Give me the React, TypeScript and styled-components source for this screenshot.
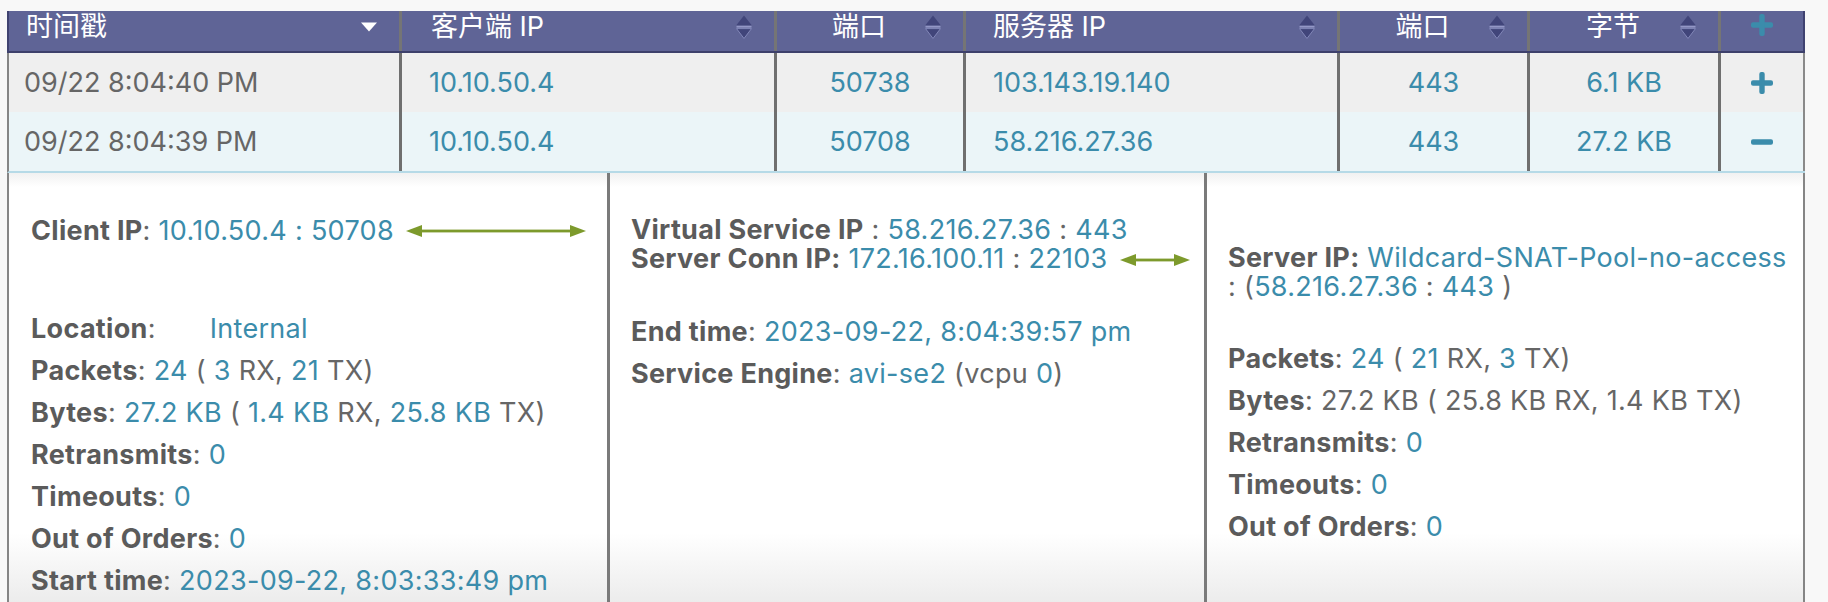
import React from "react";
import styled, { createGlobalStyle } from "styled-components";

const FONT = `Inter, "Noto Sans CJK SC", sans-serif`;
const TEAL = "#3b8cab";
const GRAY = "#5b5b5b";
const TEXT = "#666666";

const GlobalStyle = createGlobalStyle`
  html, body { margin: 0; padding: 0; background: #f8f8f8; }
  body { font-family: ${FONT}; overflow: hidden; font-variant-numeric: proportional-nums; }
`;

const Page = styled.div`
  padding: 11px 0 0 7px;
  width: 1798px;
`;

const Table = styled.div`
  display: flex;
  flex-direction: column;
  width: 1798px;
`;

const COLS = "393px 375px 189px 374px 190px 191px 84px";

const HeaderRow = styled.div`
  display: grid;
  grid-template-columns: ${COLS};
  height: 40px;
  background: #5f6496;
  border-left: 2px solid #3f4270;
  border-bottom: 2px solid #3d406b;
`;

const HeaderCell = styled.div<{ $align: "left" | "center"; $pad?: number }>`
  display: grid;
  grid-template-columns: ${(p) => (p.$align === "center" ? "1fr auto 1fr" : "auto 1fr")};
  align-items: center;
  box-sizing: border-box;
  padding: 0 22px 8px ${(p) => p.$pad ?? 0}px;
  border-right: 3px solid #757575;
  color: #ffffff;
  font-size: 27px;
  line-height: 32px;
  white-space: nowrap;
`;

const HeadLabel = styled.span``;

const IconSlot = styled.span`
  display: flex;
  justify-content: flex-end;
  align-items: center;
`;

const HeaderAction = styled.div`
  display: flex;
  align-items: center;
  justify-content: center;
  padding-bottom: 12px;
  border-right: 2px solid #3f4270;
`;

const DataRow = styled.div<{ $tone: "gray" | "blue"; $expanded?: boolean }>`
  display: grid;
  grid-template-columns: ${COLS};
  height: ${(p) => (p.$expanded ? 61 : 59)}px;
  box-sizing: border-box;
  background: ${(p) => (p.$tone === "gray" ? "#efefef" : "#ebf5f8")};
  border-left: 2px solid #858585;
  border-bottom: ${(p) => (p.$expanded ? "2px solid #b6dae7" : "none")};
`;

const Cell = styled.div<{ $align: "left" | "center"; $pad?: number; $tone?: "teal" | "gray"; $last?: boolean }>`
  display: flex;
  align-items: center;
  justify-content: ${(p) => (p.$align === "center" ? "center" : "flex-start")};
  box-sizing: border-box;
  padding-left: ${(p) => p.$pad ?? 0}px;
  border-right: ${(p) => (p.$last ? "2px solid #8a8a8a" : "3px solid #6f6f6f")};
  color: ${(p) => (p.$tone === "gray" ? TEXT : TEAL)};
  font-size: 27px;
  white-space: nowrap;
`;

const Details = styled.div`
  display: grid;
  grid-template-columns: 601px 597px 596px;
  height: 429px;
  box-sizing: border-box;
  border-left: 2px solid #858585;
  border-right: 2px solid #858585;
  background: linear-gradient(to bottom, #f1f1f1 0px, #ffffff 14px, #ffffff 360px, #ececec 429px);
`;

const DetailColumn = styled.div<{ $top: number; $pad: number; $divider?: boolean }>`
  display: flex;
  flex-direction: column;
  box-sizing: border-box;
  padding: ${(p) => p.$top}px 0 0 ${(p) => p.$pad}px;
  border-right: ${(p) => (p.$divider ? "3px solid #7a7a7a" : "none")};
`;

const Section = styled.div<{ $gap: number }>`
  display: flex;
  flex-direction: column;
  gap: 14px;
  margin-bottom: ${(p) => p.$gap}px;
`;

const Line = styled.div`
  display: flex;
  align-items: center;
  font-size: 27px;
  line-height: 28px;
  letter-spacing: 0.3px;
  color: ${TEXT};
  white-space: nowrap;
`;

const Block = styled.div`
  font-size: 27px;
  line-height: 28.5px;
  letter-spacing: 0.3px;
  color: ${TEXT};
  white-space: nowrap;
`;

const Label = styled.span`
  font-weight: 700;
  color: ${GRAY};
`;

const Val = styled.span`
  color: ${TEAL};
`;

const Spacer = styled.span<{ $w: number }>`
  display: inline-block;
  width: ${(p) => p.$w}px;
`;

const ArrowWrap = styled.span<{ $ml: number }>`
  display: inline-flex;
  vertical-align: middle;
  margin-left: ${(p) => p.$ml}px;
`;

const SortBoth = () => (
  <svg width="16" height="24" viewBox="0 0 16 24">
    <path d="M8 0.5 L15.5 10 H0.5 Z" fill="#41457a" />
    <rect x="0.5" y="11" width="15" height="1.6" fill="#9397c6" />
    <path d="M0.5 13.6 H15.5 L8 23.5 Z" fill="#41457a" stroke="#8287b8" strokeWidth="1" />
  </svg>
);

const SortDesc = () => (
  <svg width="16" height="10" viewBox="0 0 16 10">
    <path d="M0 0.5 H16 L8 9.5 Z" fill="#ffffff" />
  </svg>
);

const Plus = () => (
  <svg width="22" height="22" viewBox="0 0 22 22">
    <rect x="0" y="8.3" width="22" height="5.4" rx="2" fill={TEAL} />
    <rect x="8.3" y="0" width="5.4" height="22" rx="2" fill={TEAL} />
  </svg>
);

const Minus = () => (
  <svg width="22" height="6" viewBox="0 0 22 6">
    <rect x="0" y="0.3" width="22" height="5.4" rx="2" fill={TEAL} />
  </svg>
);

const DoubleArrow = ({ w }: { w: number }) => (
  <svg width={w} height="14" viewBox={`0 0 ${w} 14`}>
    <rect x="10" y="5.6" width={w - 20} height="2.8" fill="#7d9a2c" />
    <path d={`M0 7 L16 1 L16 13 Z`} fill="#7d9a2c" />
    <path d={`M${w} 7 L${w - 16} 1 L${w - 16} 13 Z`} fill="#7d9a2c" />
  </svg>
);

type Row = {
  time: string;
  cip: string;
  cport: string;
  sip: string;
  sport: string;
  bytes: string;
  expanded: boolean;
};

const rows: Row[] = [
  { time: "09/22 8:04:40 PM", cip: "10.10.50.4", cport: "50738", sip: "103.143.19.140", sport: "443", bytes: "6.1 KB", expanded: false },
  { time: "09/22 8:04:39 PM", cip: "10.10.50.4", cport: "50708", sip: "58.216.27.36", sport: "443", bytes: "27.2 KB", expanded: true },
];

export default function App() {
  return (
    <>
      <GlobalStyle />
      <Page>
        <Table>
          <HeaderRow>
            <HeaderCell $align="left" $pad={17}>
              <HeadLabel>时间戳</HeadLabel>
              <IconSlot><SortDesc /></IconSlot>
            </HeaderCell>
            <HeaderCell $align="left" $pad={29}>
              <HeadLabel>客户端 IP</HeadLabel>
              <IconSlot><SortBoth /></IconSlot>
            </HeaderCell>
            <HeaderCell $align="center">
              <span />
              <HeadLabel>端口</HeadLabel>
              <IconSlot><SortBoth /></IconSlot>
            </HeaderCell>
            <HeaderCell $align="left" $pad={27}>
              <HeadLabel>服务器 IP</HeadLabel>
              <IconSlot><SortBoth /></IconSlot>
            </HeaderCell>
            <HeaderCell $align="center">
              <span />
              <HeadLabel>端口</HeadLabel>
              <IconSlot><SortBoth /></IconSlot>
            </HeaderCell>
            <HeaderCell $align="center">
              <span />
              <HeadLabel>字节</HeadLabel>
              <IconSlot><SortBoth /></IconSlot>
            </HeaderCell>
            <HeaderAction>
              <Plus />
            </HeaderAction>
          </HeaderRow>
          {rows.map((r, i) => (
            <DataRow key={i} $tone={i === 0 ? "gray" : "blue"} $expanded={r.expanded}>
              <Cell $align="left" $pad={15} $tone="gray">{r.time}</Cell>
              <Cell $align="left" $pad={27}>{r.cip}</Cell>
              <Cell $align="center">{r.cport}</Cell>
              <Cell $align="left" $pad={27}>{r.sip}</Cell>
              <Cell $align="center">{r.sport}</Cell>
              <Cell $align="center">{r.bytes}</Cell>
              <Cell $align="center" $last>{r.expanded ? <Minus /> : <Plus />}</Cell>
            </DataRow>
          ))}
          <Details>
            <DetailColumn $top={44} $pad={22} $divider>
              <Section $gap={70}>
                <Line>
                  <Label>Client IP</Label>:&nbsp;<Val>10.10.50.4 : 50708</Val>
                  <ArrowWrap $ml={12}><DoubleArrow w={180} /></ArrowWrap>
                </Line>
              </Section>
              <Section $gap={0}>
                <Line>
                  <Label>Location</Label>:<Spacer $w={54} /><Val>Internal</Val>
                </Line>
                <Line>
                  <Label>Packets</Label>:&nbsp;<Val>24</Val>&nbsp;(&nbsp;<Val>3</Val>&nbsp;RX,&nbsp;<Val>21</Val>&nbsp;TX)
                </Line>
                <Line>
                  <Label>Bytes</Label>:&nbsp;<Val>27.2 KB</Val>&nbsp;(&nbsp;<Val>1.4 KB</Val>&nbsp;RX,&nbsp;<Val>25.8 KB</Val>&nbsp;TX)
                </Line>
                <Line>
                  <Label>Retransmits</Label>:&nbsp;<Val>0</Val>
                </Line>
                <Line>
                  <Label>Timeouts</Label>:&nbsp;<Val>0</Val>
                </Line>
                <Line>
                  <Label>Out of Orders</Label>:&nbsp;<Val>0</Val>
                </Line>
                <Line>
                  <Label>Start time</Label>:&nbsp;<Val>2023-09-22, 8:03:33:49 pm</Val>
                </Line>
              </Section>
            </DetailColumn>
            <DetailColumn $top={43} $pad={21} $divider>
              <Section $gap={45}>
                <Block>
                  <Label>Virtual Service IP</Label> : <Val>58.216.27.36</Val> : <Val>443</Val>
                  <br />
                  <Label>Server Conn IP:</Label> <Val>172.16.100.11</Val> : <Val>22103</Val>
                  <ArrowWrap $ml={12}><DoubleArrow w={70} /></ArrowWrap>
                </Block>
              </Section>
              <Section $gap={0}>
                <Line>
                  <Label>End time</Label>:&nbsp;<Val>2023-09-22, 8:04:39:57 pm</Val>
                </Line>
                <Line>
                  <Label>Service Engine</Label>:&nbsp;<Val>avi-se2</Val>&nbsp;(vcpu&nbsp;<Val>0</Val>)
                </Line>
              </Section>
            </DetailColumn>
            <DetailColumn $top={71} $pad={21}>
              <Section $gap={44}>
                <Block>
                  <Label>Server IP:</Label> <Val>Wildcard-SNAT-Pool-no-access</Val>
                  <br />: (<Val>58.216.27.36</Val> : <Val>443</Val> )
                </Block>
              </Section>
              <Section $gap={0}>
                <Line>
                  <Label>Packets</Label>:&nbsp;<Val>24</Val>&nbsp;(&nbsp;<Val>21</Val>&nbsp;RX,&nbsp;<Val>3</Val>&nbsp;TX)
                </Line>
                <Line>
                  <Label>Bytes</Label>:&nbsp;27.2 KB ( 25.8 KB RX, 1.4 KB TX)
                </Line>
                <Line>
                  <Label>Retransmits</Label>:&nbsp;<Val>0</Val>
                </Line>
                <Line>
                  <Label>Timeouts</Label>:&nbsp;<Val>0</Val>
                </Line>
                <Line>
                  <Label>Out of Orders</Label>:&nbsp;<Val>0</Val>
                </Line>
              </Section>
            </DetailColumn>
          </Details>
        </Table>
      </Page>
    </>
  );
}
